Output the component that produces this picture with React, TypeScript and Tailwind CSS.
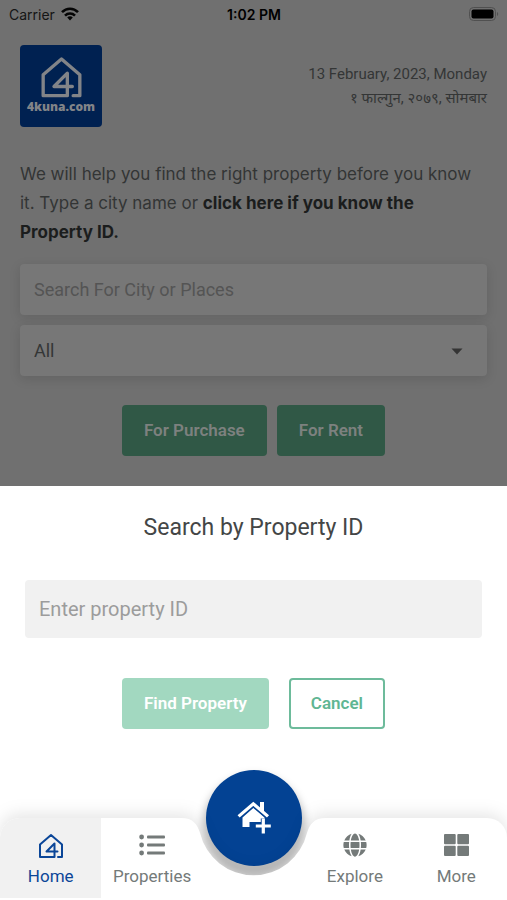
import type { ReactNode } from "react";
import { FaGlobe } from "react-icons/fa";

function HouseFour({ className }: { className: string }) {
  return (
    <svg
      viewBox="0 0 56 54"
      className={className}
      fill="none"
      stroke="currentColor"
      strokeWidth="4"
      strokeLinejoin="round"
      strokeLinecap="round"
      aria-hidden="true"
    >
      <path d="M42 50H50V25L28 6L6 25V50H35V23L19 39H41" />
    </svg>
  );
}

function StatusBar() {
  return (
    <div className="grid h-7 grid-cols-3 items-center pr-2 pl-[9px] font-['Inter',sans-serif] text-[14px] text-[#151515]">
      <div className="flex items-center gap-1.5">
        <span>Carrier</span>
        <svg viewBox="0 0 18 14" className="h-3.5 w-[18px]" fill="none" stroke="#050505" strokeWidth="2.6" aria-hidden="true">
          <path d="M1 5.2C5.6 .6 12.4 .6 17 5.2" />
          <path d="M4 8.6C6.8 5.8 11.2 5.8 14 8.6" />
          <path d="M6.2 10.4L9 13.4L11.8 10.4C10.2 8.9 7.8 8.9 6.2 10.4Z" fill="#050505" stroke="none" />
        </svg>
      </div>
      <span className="text-center font-semibold text-black">1:02 PM</span>
      <svg viewBox="0 0 30 14" className="h-3.5 w-[30px] justify-self-end" aria-hidden="true">
        <rect x=".5" y=".5" width="26" height="13" rx="4" fill="#707070" stroke="#505050" />
        <rect x="2.5" y="2.5" width="22" height="9" rx="2" fill="#000" />
        <path d="M28 5V9C29.6 8.4 29.6 5.6 28 5Z" fill="#505050" />
      </svg>
    </div>
  );
}

function Header() {
  return (
    <header className="flex items-start justify-between">
      <a
        href="#"
        className="flex h-[82px] w-[82px] flex-col items-center rounded bg-[#002151] pt-[9px] text-[#828488]"
      >
        <HouseFour className="h-[45px] w-[47px]" />
        <span className="font-['Open_Sans',sans-serif] text-[12px] leading-4 font-extrabold">4kuna.com</span>
      </a>
      <div className="pt-[17px] text-right leading-6 text-[#343636]">
        <p className="text-[15px]">13 February, 2023, Monday</p>
        <p className="font-['Roboto','Noto_Sans',sans-serif] text-[15px]">१ फाल्गुन, २०७९, सोमबार</p>
      </div>
    </header>
  );
}

function SearchForm() {
  return (
    <form className="mt-[33px]">
      <p className="font-['Inter',sans-serif] text-[17px] leading-[29px] text-[#333535]">
        We will help you find the right property before you know it. Type a city name or{" "}
        <a href="#property-id" className="font-bold text-[#1b1d1d]">
          click here if you know the Property ID.
        </a>
      </p>
      <input
        aria-label="City or place"
        placeholder="Search For City or Places"
        className="mt-[17px] block h-[51px] w-full rounded bg-[#777777] px-3.5 text-[18px] shadow-[0_3px_12px_rgba(0,0,0,0.12)] outline-none placeholder:text-[#545454]"
      />
      <div className="relative mt-2.5">
        <select
          aria-label="Property type"
          className="block h-[51px] w-full appearance-none rounded bg-[#777777] px-3.5 text-[18px] text-[#343636] shadow-[0_3px_12px_rgba(0,0,0,0.12)] outline-none"
        >
          <option>All</option>
        </select>
        <svg viewBox="0 0 12 7" className="pointer-events-none absolute top-[23px] right-6 h-[7px] w-3" aria-hidden="true">
          <path d="M.5 .5H11.5L6 6.5Z" fill="#343434" />
        </svg>
      </div>
      <div className="mt-[29px] flex justify-center gap-2.5 text-[#7d817f]">
        <button type="button" className="h-[51px] rounded bg-[#305846] px-[22px] text-[17px] font-semibold">
          For Purchase
        </button>
        <button type="button" className="h-[51px] rounded bg-[#305846] px-[22px] text-[17px] font-semibold">
          For Rent
        </button>
      </div>
    </form>
  );
}

function PropertyIdSheet() {
  return (
    <section id="property-id" className="bg-white px-[25px] pt-6 pb-[89px]">
      <h2 className="text-center text-[23px] leading-9 text-[#444646]">Search by Property ID</h2>
      <input
        aria-label="Property ID"
        placeholder="Enter property ID"
        className="mt-[34px] block h-[58px] w-full rounded bg-[#f1f1f1] px-3.5 text-[20px] outline-none placeholder:text-[#9c9c9c]"
      />
      <div className="mt-10 flex justify-center gap-5">
        <button type="button" className="h-[51px] rounded bg-[#a2d8c0] px-[22px] text-[17px] font-semibold text-white">
          Find Property
        </button>
        <button
          type="button"
          className="h-[51px] rounded border-2 border-[#6dbb9b] px-5 text-[17px] font-semibold text-[#5fb693]"
        >
          Cancel
        </button>
      </div>
    </section>
  );
}

function NavItem({ label, icon, active }: { label: string; icon: ReactNode; active?: boolean }) {
  return (
    <a
      href="#"
      className={
        active
          ? "flex h-20 flex-col items-center rounded-tl-[20px] bg-[#f1f1f1] pt-3.5 text-[#0b4698]"
          : "flex h-20 flex-col items-center pt-3.5 text-[#747a79]"
      }
    >
      <span className="flex h-[26px] items-center">{icon}</span>
      <span className="mt-1.5 text-[17px] leading-6">{label}</span>
    </a>
  );
}

function BottomNav() {
  return (
    <nav className="relative h-[82px]">
      <a
        href="#"
        aria-label="Add property"
        className="absolute -top-12 left-1/2 flex h-24 w-24 -translate-x-1/2 items-center justify-center rounded-full bg-[#034293] shadow-[0_8px_8px_3px_rgba(0,0,0,0.26)]"
      >
        <svg viewBox="0 0 34 34" className="h-[34px] w-[34px]" aria-hidden="true">
          <path d="M16.3 7L27.5 16.6V21H12.5V26H5.5V16.4Z" fill="#fff" />
          <path d="M1.6 15.4L16.3 2.8L31 15.4" fill="none" stroke="#034293" strokeWidth="5.4" />
          <path d="M23 1H27V12L23 8Z" fill="#fff" />
          <path d="M1.6 15.4L16.3 2.8L31 15.4" fill="none" stroke="#fff" strokeWidth="3.2" />
          <path d="M26.3 17.5V33M18.2 25H34" stroke="#034293" strokeWidth="5" />
          <path d="M26.3 17.5V32.5M18.8 25H33.8" stroke="#fff" strokeWidth="3.2" />
        </svg>
      </a>
      {/* bar background with the notch cut around the round button */}
      <div className="pointer-events-none absolute inset-0 flex drop-shadow-[0_-4px_8px_rgba(0,0,0,0.1)]">
        <div className="flex-1 rounded-tl-[20px] bg-white" />
        <svg viewBox="0 0 157 82" className="h-[82px] w-[157px]" aria-hidden="true">
          <path
            d="M0 0H6C18 0 22 6 25 15A55 55 0 0 0 132 15C135 6 139 0 151 0H157V82H0Z"
            fill="#fff"
          />
        </svg>
        <div className="flex-1 rounded-tr-[20px] bg-white" />
      </div>
      <div className="pointer-events-none relative grid grid-cols-5 *:pointer-events-auto">
        <NavItem label="Home" active icon={<HouseFour className="h-[27px] w-[28px]" />} />
        <NavItem
          label="Properties"
          icon={
            <svg viewBox="0 0 26 22" className="h-[22px] w-[26px]" fill="currentColor" aria-hidden="true">
              <circle cx="2.6" cy="3" r="2.4" />
              <circle cx="2.6" cy="11" r="2.4" />
              <circle cx="2.6" cy="19" r="2.4" />
              <rect x="8" y="1.6" width="18" height="3" rx="1" />
              <rect x="8" y="9.6" width="18" height="3" rx="1" />
              <rect x="8" y="17.6" width="18" height="3" rx="1" />
            </svg>
          }
        />
        <div className="invisible" />
        <NavItem label="Explore" icon={<FaGlobe size={24} aria-hidden="true" />} />
        <NavItem
          label="More"
          icon={
            <svg viewBox="0 0 25 22" className="h-[22px] w-[25px]" fill="currentColor" aria-hidden="true">
              <rect width="11.7" height="10.2" rx="1" />
              <rect x="13.3" width="11.7" height="10.2" rx="1" />
              <rect y="11.8" width="11.7" height="10.2" rx="1" />
              <rect x="13.3" y="11.8" width="11.7" height="10.2" rx="1" />
            </svg>
          }
        />
      </div>
    </nav>
  );
}

export default function App() {
  return (
    <main className="min-h-screen bg-white font-['Roboto',sans-serif]">
      <div className="bg-[#707070]">
        <StatusBar />
        <div className="px-5 pt-[17px] pb-[30px]">
          <Header />
          <SearchForm />
        </div>
      </div>
      <PropertyIdSheet />
      <BottomNav />
    </main>
  );
}
